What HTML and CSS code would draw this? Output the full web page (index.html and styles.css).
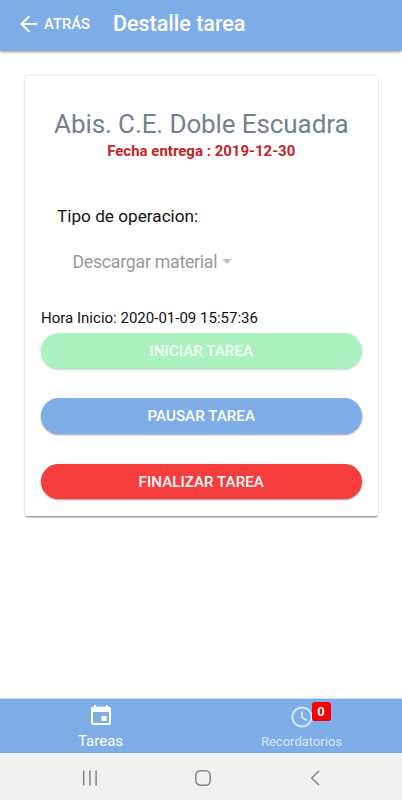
FILE: index.html
```html
<!DOCTYPE html>
<html lang="es">
<head>
<meta charset="utf-8">
<title>Destalle tarea</title>
<link rel="stylesheet" href="styles.css">
</head>
<body>
<header class="toolbar">
  <a class="back"><svg class="arrow" viewBox="0 0 18 18"><path d="M17.3 9H2M9.3 1.2L1.5 9l7.8 7.8"/></svg><span>ATRÁS</span></a>
  <h1 class="page-title">Destalle tarea</h1>
</header>
<main class="content">
  <section class="card">
    <h2 class="task-name"><span>Abis. C.E. Doble Escuadra</span></h2>
    <p class="due"><span>Fecha entrega : 2019-12-30</span></p>
    <p class="label"><span>Tipo de operacion:</span></p>
    <div class="select"><span>Descargar material</span><i class="caret"></i></div>
    <p class="start"><span>Hora Inicio: 2020-01-09 15:57:36</span></p>
    <div class="actions">
      <button class="btn btn-start"><span>INICIAR TAREA</span></button>
      <button class="btn btn-pause"><span>PAUSAR TAREA</span></button>
      <button class="btn btn-end"><span>FINALIZAR TAREA</span></button>
    </div>
  </section>
</main>
<nav class="tabs">
  <a class="tab active">
    <svg class="tab-icon" viewBox="0 0 20 20"><path fill-rule="evenodd" d="M3 0h2.200v1.800h9.600V0H17v1.800h1a2 2 0 0 1 2 2V18a2 2 0 0 1-2 2H2a2 2 0 0 1-2-2V3.800a2 2 0 0 1 2-2h1zM2 7v11h16V7zM10.500 11h5v5h-5z"/></svg>
    <span class="tab-label">Tareas</span>
  </a>
  <a class="tab">
    <span class="icon-wrap">
      <svg class="tab-icon clock" viewBox="0 0 22 22"><circle cx="11" cy="11" r="9.600"/><path d="M11 5.500V11.500L16 14.500"/></svg>
      <b class="badge">0</b>
    </span>
    <span class="tab-label">Recordatorios</span>
  </a>
</nav>
<footer class="system">
  <svg viewBox="0 0 16 16"><path d="M1.700 .5v15M7.900 .5v15M14.100 .5v15"/></svg>
  <svg viewBox="0 0 16 16"><rect x=".8" y=".8" width="14.400" height="14.400" rx="4.500"/></svg>
  <svg viewBox="0 0 16 16"><path d="M12 1L4.800 8l7.200 7"/></svg>
</footer>
</body>
</html>
```
FILE: styles.css
```css
* { box-sizing: border-box; }
body {
  margin: 0;
  width: 402px;
  height: 800px;
  display: flex;
  flex-direction: column;
  overflow: hidden;
  background: #fff;
  color: #111;
  font-family: Roboto, sans-serif;
}
h1, h2, p { margin: 0; font-weight: 400; }
.toolbar {
  height: 51px;
  display: flex;
  align-items: center;
  padding: 0 0 4px 20px;
  background: #7eade8;
  color: #fff;
  box-shadow: 0 1px 3px rgba(0, 0, 0, .4);
}
.back { display: flex; align-items: center; gap: 6px; width: 93px; font-size: 14.800px; font-weight: 500; }
.arrow { width: 18px; height: 18px; fill: none; stroke: #fff; stroke-width: 2; }
.page-title { font-size: 21.500px; font-weight: 500; line-height: 26px; }
.content { flex: 1; padding: 25px 24.500px 0 25px; }
.card {
  height: 440px;
  padding: 32px 16px 0;
  background: #fff;
  border-radius: 2px;
  box-shadow: 0 2px 2px -1px rgba(0, 0, 0, .5), 0 0 3px rgba(0, 0, 0, .18);
}
.task-name { font-size: 26px; line-height: 32px; letter-spacing: -.1px; text-align: center; color: #738090; }
.due { margin-top: 1px; font-size: 15px; font-weight: 700; line-height: 20px; text-align: center; color: #c22428; }
.label { margin-top: 43px; padding-left: 16px; font-size: 17.200px; line-height: 24px; }
.select { display: flex; align-items: center; gap: 5px; margin-top: 22px; padding-left: 31.500px; font-size: 17.700px; line-height: 24px; letter-spacing: -.25px; color: #999; }
.caret { margin-top: -2px; border: 5px solid transparent; border-top-color: #c4c4c4; border-bottom: 0; }
.start { margin-top: 34px; font-size: 15px; line-height: 20px; letter-spacing: .01px; }
.actions { display: flex; flex-direction: column; gap: 29.600px; margin-top: 5px; }
.btn {
  height: 35.700px;
  padding: 1px 0 0;
  border: 0;
  border-radius: 18px;
  color: #fff;
  font: 500 15.200px/34.700px Roboto, sans-serif;
  box-shadow: 0 1px 2px rgba(0, 0, 0, .4);
}
.btn-start { background: #acf1c0; color: #f6fff8; box-shadow: 0 1px 2px rgba(0, 0, 0, .18); }
.btn-pause { background: #7eade8; }
.btn-end { background: #f63d3e; }
.tabs { height: 54px; display: flex; background: #7eade8; box-shadow: 0 -1px 1px rgba(126, 173, 232, .4); }
.tab { flex: 1; display: flex; flex-direction: column; align-items: center; padding-top: 6px; color: #d3e7fb; font-size: 13px; }
.tab.active { color: #fff; font-size: 15px; }
.tab-icon { display: block; width: 20px; height: 20px; fill: currentColor; }
.icon-wrap { position: relative; margin-top: 1px; }
.clock { width: 22px; height: 22px; fill: none; stroke: currentColor; stroke-width: 2; }
.tab-label { margin-top: 6px; line-height: 20px; }
.icon-wrap + .tab-label { margin-top: 4px; }
.badge {
  position: absolute;
  left: 21px;
  top: -4px;
  width: 19px;
  height: 19px;
  border-radius: 3px;
  background: #f90005;
  color: #fff;
  font-size: 13px;
  line-height: 19px;
  text-align: center;
}
.system { height: 47px; display: flex; justify-content: space-between; align-items: center; padding: 2px 79px 0 82px; background: #f1f1f1; }
.system svg { width: 16px; height: 16px; fill: none; stroke: #858585; stroke-width: 1.500; }
```
